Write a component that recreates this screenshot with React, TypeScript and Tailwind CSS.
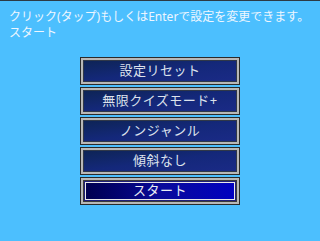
const items = ["設定リセット", "無限クイズモード+", "ノンジャンル", "傾斜なし"];

function MenuButton({ label, active }: { label: string; active?: boolean }) {
  return (
    <div className="h-[28px] w-[160px] border border-[#2a2a2a] bg-[#b8b8b8] p-[2px]">
      {active ? (
        <div className="h-full w-full border border-[#3a3a3a] bg-[#20207a] p-[1px]">
          <div className="flex h-full w-full items-center justify-center border border-[#e8e8e8] bg-gradient-to-r from-[#000050] via-[#0a0a9a] to-[#0000c0] text-[13px] tracking-[0.5px] text-[#e8ecf4]">
            {label}
          </div>
        </div>
      ) : (
        <div className="flex h-full w-full items-center justify-center border border-[#303848] bg-gradient-to-br from-[#0e2456] via-[#14287a] to-[#1a2a86] text-[13px] tracking-[0.5px] text-[#dde2ec]">
          {label}
        </div>
      )}
    </div>
  );
}

export default function App() {
  return (
    <div
      className="h-[241px] w-[320px] border-t border-[#2c3a44] bg-[#4cbffe]"
      style={{ fontFamily: '"Noto Sans", "Noto Sans CJK JP", sans-serif' }}
    >
      <div className="whitespace-nowrap px-[9px] pt-[8px] text-[12px] leading-[16px] text-[#eef6ff]">
        <p>クリック(タップ)もしくはEnterで設定を変更できます。</p>
        <p>スタート</p>
      </div>
      <div className="mt-[16px] flex flex-col items-center gap-[2px]">
        {items.map((t) => (
          <MenuButton key={t} label={t} />
        ))}
        <MenuButton label="スタート" active />
      </div>
    </div>
  );
}
